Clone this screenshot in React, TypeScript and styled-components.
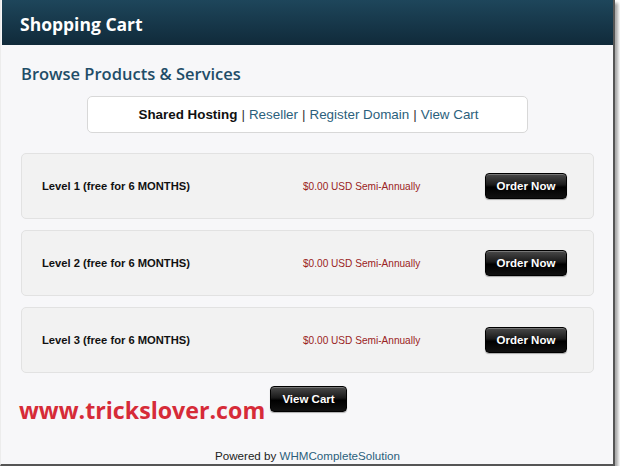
import styled, { createGlobalStyle } from 'styled-components';

const GlobalStyle = createGlobalStyle`
  body {
    margin: 0;
    background: #ffffff;
    font-family: Arial, "Liberation Sans", sans-serif;
  }
`;

const Frame = styled.div`
  position: relative;
  width: 612px;
  height: 464px;
  background: #f7f7f9;
  border-left: 1px solid #ececec;
  border-right: 2px solid #555;
  border-bottom: 2px solid #555;
  box-shadow: 3px 3px 3px rgba(0, 0, 0, 0.35);
  display: flex;
  flex-direction: column;
`;

const Header = styled.header`
  height: 45px;
  margin-left: 1px;
  padding-left: 18px;
  display: flex;
  align-items: center;
  background: linear-gradient(#1e465b, #102a3a);
  color: #fff;
  font-family: "Open Sans", sans-serif;
  font-weight: 700;
  font-size: 17.5px;
  padding-top: 2px;
  box-sizing: border-box;
`;

const Content = styled.main`
  flex: 1;
  padding: 0 19px 0 20px;
  display: flex;
  flex-direction: column;
`;

const Heading = styled.h2`
  margin: 18px 0 0;
  font-family: "Open Sans", sans-serif;
  font-weight: 600;
  font-size: 16.5px;
  line-height: 22px;
  color: #1f4d68;
`;

const Nav = styled.nav`
  align-self: center;
  width: 441px;
  height: 37px;
  margin-top: 11px;
  background: #fff;
  border: 1px solid #d8d8d8;
  border-radius: 5px;
  display: flex;
  align-items: center;
  justify-content: center;
  gap: 4px;
  font-size: 13.4px;
  color: #333;
  padding-left: 2px;
  box-sizing: border-box;
`;

const NavCurrent = styled.b`
  color: #111;
`;

const NavLink = styled.a`
  color: #2b5f7c;
  text-decoration: none;
`;

const ProductList = styled.ul`
  list-style: none;
  margin: 20px 0 0;
  padding: 0;
  display: flex;
  flex-direction: column;
  gap: 11px;
`;

const ProductRow = styled.li`
  height: 64px;
  padding: 0 26px 0 20px;
  background: #f2f2f2;
  border: 1px solid #e2e2e2;
  border-radius: 5px;
  display: flex;
  align-items: center;
`;

const ProductName = styled.span`
  width: 261px;
  font-size: 11.2px;
  font-weight: 700;
  color: #111;
`;

const Price = styled.span`
  flex: 1;
  font-size: 10.1px;
  color: #9a2222;
`;

const DarkButton = styled.button<{ $w: number }>`
  width: ${(p) => p.$w}px;
  height: 26px;
  padding: 0;
  border: 1px solid #000;
  border-radius: 4px;
  background: linear-gradient(#4a4a4a 0%, #1a1a1a 45%, #000 55%, #111 100%);
  box-shadow: inset 0 1px 0 rgba(255, 255, 255, 0.25), 0 1px 1px rgba(0, 0, 0, 0.3);
  color: #fff;
  font-family: Arial, "Liberation Sans", sans-serif;
  font-size: 11.5px;
  font-weight: 700;
  cursor: pointer;
`;

const CartRow = styled.div`
  margin-top: 13px;
  padding-left: 249px;
`;

const Watermark = styled.div`
  position: absolute;
  left: 18px;
  top: 394px;
  font-family: "Open Sans", sans-serif;
  font-weight: 700;
  font-size: 23.2px;
  line-height: 32px;
  color: #d62b38;
  pointer-events: none;
`;

const Footer = styled.footer`
  margin-top: auto;
  padding-bottom: 2px;
  text-align: center;
  font-size: 11.6px;
  color: #222;
`;

const products = [
  'Level 1 (free for 6 MONTHS)',
  'Level 2 (free for 6 MONTHS)',
  'Level 3 (free for 6 MONTHS)',
];

export default function App() {
  return (
    <>
      <GlobalStyle />
      <Frame>
        <Header>Shopping Cart</Header>
        <Content>
          <Heading>Browse Products &amp; Services</Heading>
          <Nav>
            <NavCurrent>Shared Hosting</NavCurrent>|<NavLink href="#">Reseller</NavLink>|
            <NavLink href="#">Register Domain</NavLink>|<NavLink href="#">View Cart</NavLink>
          </Nav>
          <ProductList>
            {products.map((name) => (
              <ProductRow key={name}>
                <ProductName>{name}</ProductName>
                <Price>$0.00 USD Semi-Annually</Price>
                <DarkButton $w={82}>Order Now</DarkButton>
              </ProductRow>
            ))}
          </ProductList>
          <CartRow>
            <DarkButton $w={77}>View Cart</DarkButton>
          </CartRow>
          <Footer>
            Powered by <NavLink href="#">WHMCompleteSolution</NavLink>
          </Footer>
        </Content>
        <Watermark>www.trickslover.com</Watermark>
      </Frame>
    </>
  );
}
